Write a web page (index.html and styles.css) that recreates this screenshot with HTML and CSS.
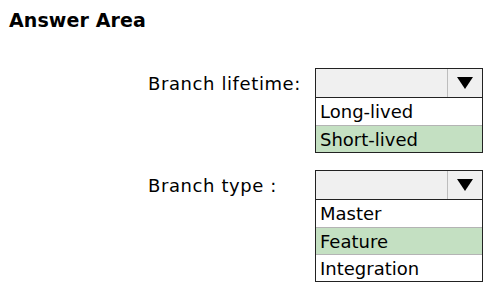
FILE: index.html
```html
<!DOCTYPE html>
<html lang="en">
<head>
    <meta charset="UTF-8">
    <meta name="viewport" content="width=device-width, initial-scale=1.0">
    <title>Answer Area</title>
    <link rel="stylesheet" href="styles.css">
</head>
<body>
    <h1>Answer Area</h1>

    <div class="answers">
        <div class="label">Branch lifetime:</div>
        <div class="dropdown">
            <div class="head">
                <div class="value"></div>
                <div class="arrow"><span class="tri"></span></div>
            </div>
            <ul class="options">
                <li>Long-lived</li>
                <li class="picked">Short-lived</li>
            </ul>
        </div>

        <div class="label">Branch type :</div>
        <div class="dropdown">
            <div class="head">
                <div class="value"></div>
                <div class="arrow"><span class="tri"></span></div>
            </div>
            <ul class="options">
                <li>Master</li>
                <li class="picked">Feature</li>
                <li>Integration</li>
            </ul>
        </div>
    </div>
</body>
</html>
```

FILE: styles.css
```css
body {
    margin: 0;
    font-family: "DejaVu Sans", "Liberation Sans", sans-serif;
    color: #000;
    background: #fff;
}
h1 {
    margin: 0;
    padding: 8px 0 0 9px;
    font-size: 19px;
    font-weight: bold;
    line-height: 24px;
    letter-spacing: 0.1px;
}
.answers {
    display: grid;
    grid-template-columns: 167px 168px;
    row-gap: 17px;
    margin: 36px 0 0 148px;
}
.label {
    height: 30px;
    line-height: 31px;
    font-size: 18px;
    letter-spacing: 0.6px;
}
.head {
    display: flex;
    height: 30px;
    box-sizing: border-box;
    border: 1px solid #222;
    background: #f0f0f0;
}
.value {
    flex: 1;
}
.arrow {
    width: 34px;
    border-left: 1px solid #bdbdbd;
    display: flex;
    align-items: center;
    justify-content: center;
}
.tri {
    width: 0;
    height: 0;
    border-left: 8.5px solid transparent;
    border-right: 8.5px solid transparent;
    border-top: 12px solid #000;
}
.options {
    list-style: none;
    margin: 0;
    padding: 0;
    border: 1px solid #222;
    border-top: none;
}
.options li {
    height: 26px;
    line-height: 28px;
    padding-left: 4px;
    font-size: 18px;
    border-top: 1px solid #b4b4b4;
}
.options li:first-child {
    border-top: none;
    height: 27px;
}
.options li.picked {
    background: #c4e0c2;
}
```
